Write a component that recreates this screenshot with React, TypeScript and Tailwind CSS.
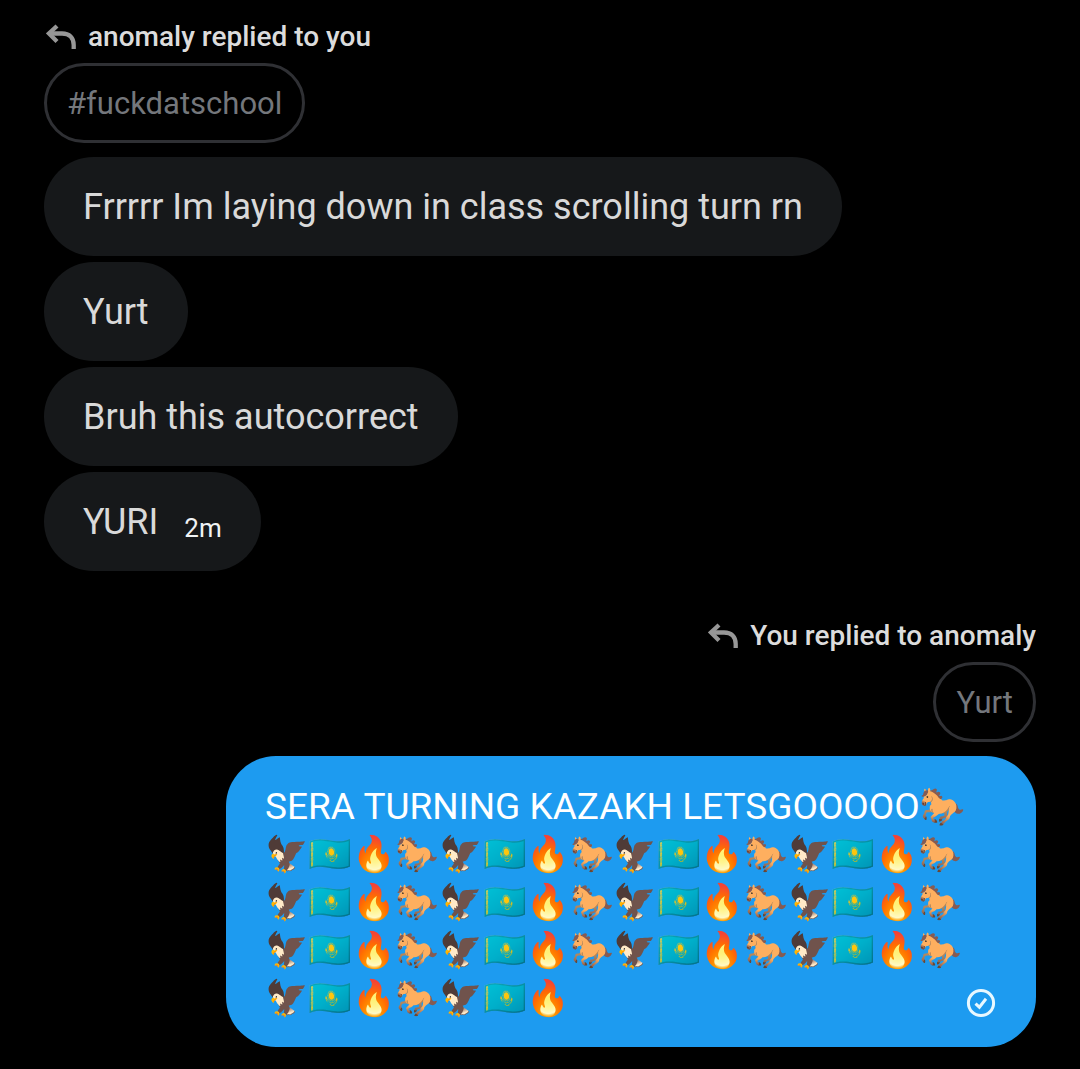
import type { ReactNode } from 'react';
import clsx from 'clsx';

const HERD = '🦅🇰🇿🔥🐎';
const HYPE = HERD.repeat(13) + '🦅🇰🇿🔥';

function ReplyArrow() {
  return (
    <svg viewBox="0 0 30 26" className="h-[26px] w-[30px] shrink-0" fill="none" stroke="#979797" strokeWidth="4.3" aria-hidden="true">
      <path d="M11 2 3 9.5 11 17.5" />
      <path d="M3 9.5H16C23.5 9.5 27.7 13.8 27.7 21V25" />
    </svg>
  );
}

function SentIcon() {
  return (
    <svg viewBox="0 0 30 30" className="h-[30px] w-[30px]" fill="none" stroke="#e8f8ff" strokeWidth="3" role="img" aria-label="Sent">
      <circle cx="15" cy="15" r="12.6" />
      <path d="M9.5 15.6 13.4 19.2 20 10.8" />
    </svg>
  );
}

interface ReplyProps {
  label: string;
  quote: string;
  mine?: boolean;
}

function Reply({ label, quote, mine }: ReplyProps) {
  return (
    <div className={clsx('flex flex-col gap-2.5 pb-2', mine ? 'items-end' : 'items-start')}>
      <div className="flex items-center gap-3 pl-0.5 text-[28px] leading-8 font-medium text-[#dcdcdc]">
        <ReplyArrow />
        <span>{label}</span>
      </div>
      <button type="button" className="rounded-full border-3 border-[#2f3034] px-5 pt-[18px] pb-4 text-[31px] leading-10 text-[#74777c]">
        {quote}
      </button>
    </div>
  );
}

interface BubbleProps {
  children: ReactNode;
  time?: string;
}

function Bubble({ children, time }: BubbleProps) {
  return (
    <div className="flex items-end gap-[26px] rounded-[50px] bg-[#16181a] px-[39px] pt-[26px] pb-6 text-[36px] leading-[49px] text-[#d9d9d9]">
      <p>{children}</p>
      {time && <time className="text-[26px] leading-[38px] text-[#f0f3f4]">{time}</time>}
    </div>
  );
}

export default function App() {
  return (
    <main className="flex min-h-screen flex-col gap-[49px] bg-black px-11 pt-[21px] pb-5 font-[Roboto,'Noto_Color_Emoji',sans-serif]">
      <section className="flex flex-col items-start gap-1.5">
        <Reply label="anomaly replied to you" quote="#fuckdatschool" />
        <Bubble>Frrrrr Im laying down in class scrolling turn rn</Bubble>
        <Bubble>Yurt</Bubble>
        <Bubble>Bruh this autocorrect</Bubble>
        <Bubble time="2m">YURI</Bubble>
      </section>

      <section className="flex flex-col items-end gap-1.5">
        <Reply label="You replied to anomaly" quote="Yurt" mine />
        <div className="relative max-w-[810px] rounded-[50px] bg-[#1d9bf0] px-[39px] pt-[27px] pb-6 text-white">
          <p className="text-[37px] leading-12">SERA TURNING KAZAKH LETSGOOOOO🐎</p>
          <p className="font-['Noto_Color_Emoji',sans-serif] text-[35px] leading-12">{HYPE}</p>
          <span className="absolute right-10 bottom-[29px]">
            <SentIcon />
          </span>
        </div>
      </section>
    </main>
  );
}
